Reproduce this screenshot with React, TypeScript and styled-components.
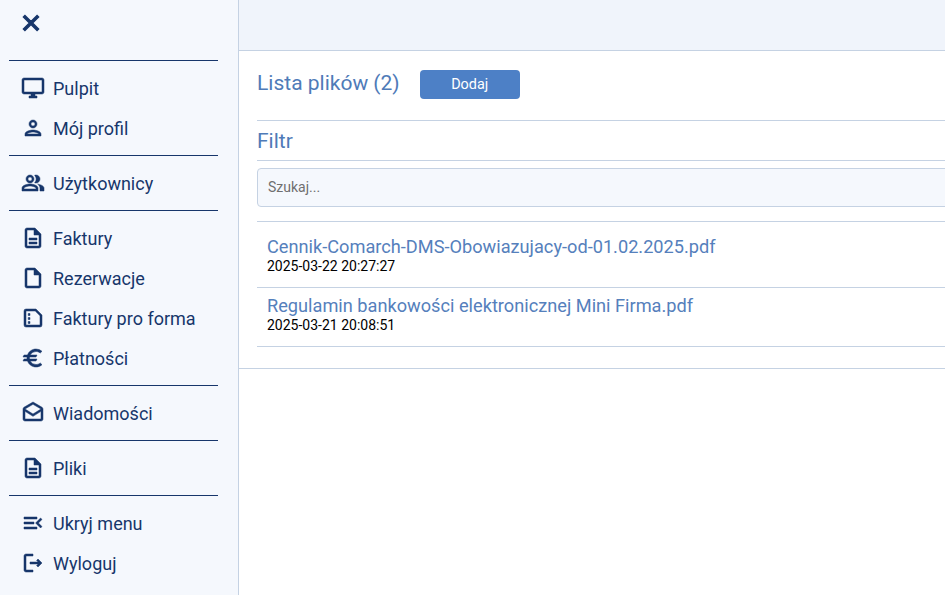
import React from 'react';
import styled, { createGlobalStyle } from 'styled-components';
import {
  MdClose,
  MdOutlineDesktopWindows,
  MdOutlinePerson,
  MdOutlinePeopleAlt,
  MdOutlineDescription,
  MdOutlineInsertDriveFile,
  MdOutlineEuro,
  MdOutlineDrafts,
  MdOutlineMenuOpen,
  MdOutlineLogout,
} from 'react-icons/md';

const GlobalStyle = createGlobalStyle`
  html, body {
    margin: 0;
    padding: 0;
    height: 100%;
    overflow: hidden;
    background: #fff;
    font-family: Roboto, "Liberation Sans", sans-serif;
  }
`;

const Layout = styled.div`
  display: flex;
  width: 945px;
  height: 595px;
  overflow: hidden;
`;

const Sidebar = styled.nav`
  flex: 0 0 239px;
  box-sizing: border-box;
  height: 595px;
  padding: 0 20px 0 9px;
  background: #f5f8fd;
  border-right: 1px solid #c5d2e3;
  color: #17366b;
`;

const CloseRow = styled.div`
  display: flex;
  align-items: center;
  height: 46px;
  margin-bottom: 14px;
  padding-left: 9px;

  svg {
    stroke-width: 1.3px;
  }

  svg path[fill='none'] {
    stroke: none;
  }
`;

const Divider = styled.hr`
  height: 1px;
  margin: 0;
  border: 0;
  background: #17366b;
`;

const MenuGroup = styled.div`
  padding: 7px 0;
`;

const MenuItem = styled.a`
  display: flex;
  align-items: center;
  gap: 8px;
  height: 40px;
  padding-left: 12px;
  font-size: 18px;
  color: #17366b;
`;

const IconBox = styled.span`
  display: flex;
  width: 24px;
  height: 24px;
  font-size: 24px;

  svg {
    stroke-width: 0.5px;
  }

  svg path[fill='none'] {
    stroke: none;
  }
`;

const Main = styled.main`
  flex: 1;
  min-width: 0;
`;

const TopBar = styled.header`
  box-sizing: border-box;
  height: 51px;
  background: #f0f4fb;
  border-bottom: 1px solid #c5d2e3;
`;

const Content = styled.section`
  box-sizing: border-box;
  height: 318px;
  padding-left: 18px;
  border-bottom: 1px solid #c5d2e3;
`;

const TitleRow = styled.div`
  display: flex;
  align-items: center;
  gap: 20px;
  box-sizing: border-box;
  height: 70px;
  padding-bottom: 2px;
  border-bottom: 1px solid #c5d2e3;
`;

const Title = styled.h1`
  margin: 0 0 3px;
  font-size: 21px;
  font-weight: 400;
  color: #4f7bb8;
`;

const AddButton = styled.button`
  width: 100px;
  height: 29px;
  border: 0;
  border-radius: 4px;
  background: #4d80c6;
  color: #fff;
  font-family: inherit;
  font-size: 14.4px;
  font-weight: 400;
`;

const FilterTitle = styled.h2`
  display: flex;
  align-items: center;
  height: 39px;
  margin: 0;
  border-bottom: 1px solid #c5d2e3;
  font-size: 21px;
  font-weight: 400;
  color: #4f7bb8;
`;

const SearchInput = styled.input`
  display: block;
  box-sizing: border-box;
  width: 720px;
  height: 39px;
  margin: 7px 0 14px;
  padding: 0 10px 2px;
  border: 1px solid #c5d2e3;
  border-radius: 4px;
  background: #f5f8fd;
  font-family: inherit;
  font-size: 14px;

  &::placeholder {
    color: #6f6f6f;
    opacity: 1;
  }
`;

const FileList = styled.ul`
  margin: 0;
  padding: 0;
  list-style: none;
  border-top: 1px solid #c5d2e3;
`;

const FileRow = styled.li<{ $first?: boolean }>`
  box-sizing: border-box;
  height: ${(p) => (p.$first ? 66 : 59)}px;
  padding: ${(p) => (p.$first ? 14 : 7)}px 0 0 10px;
  border-bottom: 1px solid #c5d2e3;
`;

const FileName = styled.a`
  display: block;
  height: 21px;
  font-size: 18.2px;
  line-height: 22px;
  color: #5580bc;
`;

const FileDate = styled.div`
  height: 18px;
  font-size: 14px;
  line-height: 18px;
  color: #000;
`;

const ProFormaIcon = () => (
  <svg width="24" height="24" viewBox="0 0 24 24" fill="currentColor" stroke="currentColor">
    <path
      fillRule="evenodd"
      d="M5 3h10l6 6v10a2 2 0 0 1-2 2H5a2 2 0 0 1-2-2V5a2 2 0 0 1 2-2zm0 2v14h14v-9.2L14.2 5z"
    />
    <path d="M7.2 7.5h1.8v2H7.2zM7.2 11.5h1.8v2H7.2zM7.2 15.5h1.8v2H7.2z" />
  </svg>
);

const menuGroups: { label: string; icon: React.ReactNode }[][] = [
  [
    { label: 'Pulpit', icon: <MdOutlineDesktopWindows /> },
    { label: 'Mój profil', icon: <MdOutlinePerson /> },
  ],
  [{ label: 'Użytkownicy', icon: <MdOutlinePeopleAlt /> }],
  [
    { label: 'Faktury', icon: <MdOutlineDescription /> },
    { label: 'Rezerwacje', icon: <MdOutlineInsertDriveFile /> },
    { label: 'Faktury pro forma', icon: <ProFormaIcon /> },
    { label: 'Płatności', icon: <MdOutlineEuro /> },
  ],
  [{ label: 'Wiadomości', icon: <MdOutlineDrafts /> }],
  [{ label: 'Pliki', icon: <MdOutlineDescription /> }],
  [
    { label: 'Ukryj menu', icon: <MdOutlineMenuOpen /> },
    { label: 'Wyloguj', icon: <MdOutlineLogout /> },
  ],
];

const files = [
  { name: 'Cennik-Comarch-DMS-Obowiazujacy-od-01.02.2025.pdf', date: '2025-03-22 20:27:27' },
  { name: 'Regulamin bankowości elektronicznej Mini Firma.pdf', date: '2025-03-21 20:08:51' },
];

const App = () => {
  return (
    <Layout>
      <GlobalStyle />
      <Sidebar>
        <CloseRow>
          <MdClose size={26} />
        </CloseRow>
        {menuGroups.map((group, i) => (
          <React.Fragment key={i}>
            <Divider />
            <MenuGroup>
              {group.map((item) => (
                <MenuItem key={item.label}>
                  <IconBox>{item.icon}</IconBox>
                  {item.label}
                </MenuItem>
              ))}
            </MenuGroup>
          </React.Fragment>
        ))}
      </Sidebar>
      <Main>
        <TopBar />
        <Content>
          <TitleRow>
            <Title>Lista plików (2)</Title>
            <AddButton>Dodaj</AddButton>
          </TitleRow>
          <FilterTitle>Filtr</FilterTitle>
          <SearchInput placeholder="Szukaj..." />
          <FileList>
            {files.map((file, i) => (
              <FileRow key={file.name} $first={i === 0}>
                <FileName>{file.name}</FileName>
                <FileDate>{file.date}</FileDate>
              </FileRow>
            ))}
          </FileList>
        </Content>
      </Main>
    </Layout>
  );
};

export default App;
